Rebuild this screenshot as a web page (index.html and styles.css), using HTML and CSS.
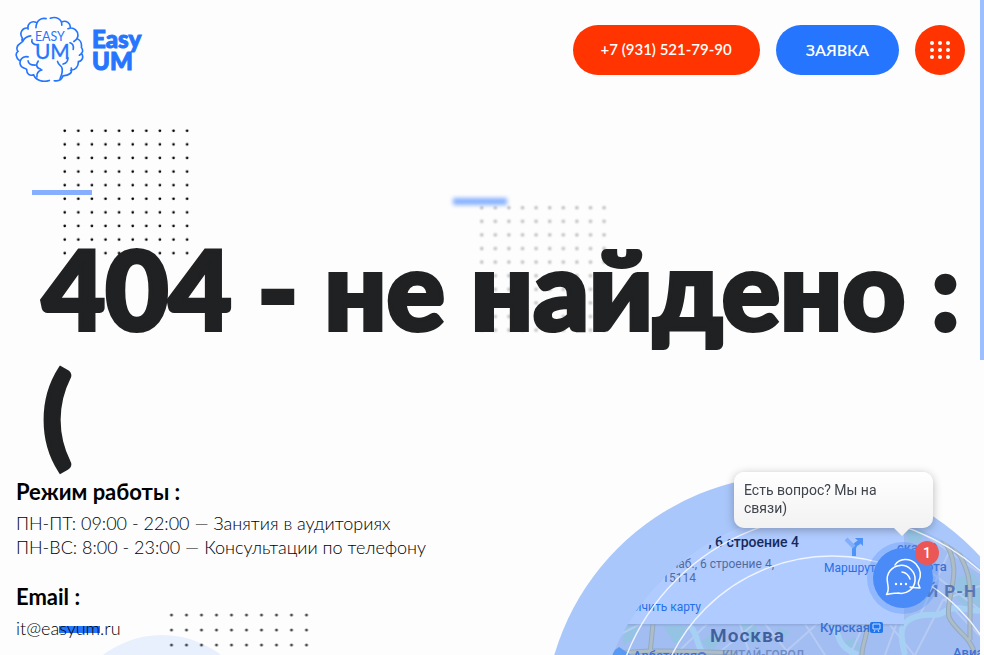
FILE: index.html
```html
<!DOCTYPE html>
<html lang="ru">
<head>
<meta charset="utf-8">
<meta name="viewport" content="width=device-width, initial-scale=1">
<title>404 - не найдено</title>
<link rel="stylesheet" href="styles.css">
</head>
<body>
<header class="header">
  <a class="logo" href="#">
    <svg class="logo-mark" viewBox="13 12 214 204" aria-hidden="true">
      <g class="logo-lines">
        <path d="M108 18C94 15 78 22 77 46M77 29C62 24 50 34 53 50M53 47C36 44 24 62 36 79Q32 84 37 88M61 71C50 72 44 76 39 84C34 96 22 91 19 107Q18 114 22 118C13 124 16 138 26 146M53 135C34 130 26 148 29 158C32 172 46 168 49 174C48 188 58 194 70 190C76 206 98 214 118 207"/>
        <path d="M121 17C139 10 157 20 156 38M156 28C169 22 184 32 182 47M175 49C192 41 210 58 204 76Q202 83 193 88M204 80C217 86 217 98 216 106C224 117 218 125 210 130M216 124C225 136 217 149 207 149C207 164 198 176 183 176M185 169C190 185 177 192 160 193C156 206 146 210 133 208"/>
        <path d="M65 82C62 90 69 98 80 98M181 92C190 95 193 102 191 112M53 147C53 157 63 161 77 160M84 148C76 158 78 170 91 172M95 175C84 178 79 187 80 196M143 149C146 164 157 160 157 171C159 181 156 190 151 201M175 138C175 150 170 155 160 157"/>
      </g>
      <text class="logo-easy" x="74" y="85">EASY</text>
      <text class="logo-um" x="74" y="143">UM</text>
    </svg>
    <span class="logo-name">Easy<br>UM</span>
  </a>
  <nav class="actions">
    <a class="pill pill-red" href="tel:+79315217990">+7 (931) 521-79-90</a>
    <button class="pill pill-blue" type="button">ЗАЯВКА</button>
    <button class="menu" type="button" aria-label="Меню">
      <svg viewBox="0 0 50 50"><g fill="#fff"><circle cx="17" cy="18" r="2"/><circle cx="25" cy="18" r="2"/><circle cx="33" cy="18" r="2"/><circle cx="17" cy="25" r="2"/><circle cx="25" cy="25" r="2"/><circle cx="33" cy="25" r="2"/><circle cx="17" cy="32" r="2"/><circle cx="25" cy="32" r="2"/><circle cx="33" cy="32" r="2"/></g></svg>
    </button>
  </nav>
</header>

<main class="hero">
  <svg class="dots dots-sharp" viewBox="0 0 100 100" aria-hidden="true"><defs><pattern id="dot" width="10" height="10" patternUnits="userSpaceOnUse"><circle cx="2" cy="2" r="1"/></pattern></defs><rect width="100" height="100" fill="url(#dot)"/></svg>
  <span class="bar bar-sharp"></span>
  <svg class="dots dots-soft" viewBox="0 0 100 100" aria-hidden="true"><rect width="100" height="100" fill="url(#dot)"/></svg>
  <span class="bar bar-soft"></span>
  <h1>404 - не найдено : (</h1>
</main>

<footer class="footer">
  <span class="disc"></span>
  <svg class="dots dots-footer" viewBox="0 0 100 30" aria-hidden="true"><rect width="100" height="30" fill="url(#dot)"/></svg>
  <span class="bar bar-footer"></span>
  <svg class="map" viewBox="540 470 440 185" role="img" aria-label="Карта">
    <defs><clipPath id="lens"><circle cx="827" cy="741" r="231"/></clipPath>
    <linearGradient id="fade" x2="0" y2="1"><stop stop-color="#829bc9" stop-opacity=".6"/><stop offset="1" stop-color="#829bc9" stop-opacity="0"/></linearGradient></defs>
    <circle cx="795" cy="726" r="251" fill="#a9c7fb"/>
    <g clip-path="url(#lens)">
      <rect x="540" y="500" width="440" height="155" fill="#a2bdf1"/>
      <g fill="#94c3e3"><path d="M625 626l14-2-4 13-12 8zM664 626l22 0-3 14-9 4zM701 641l15-9 5 8-10 12zM739 624l15 0 8 16-10 3zM777 627l12 5-7 9zM958 577l16-4 6 12v30l-12-6-14-13zM921 589l10 7-5 8-8-6zM905 530l21 1-8 12-9-1zM841 643l15-6 4 14z"/></g>
      <g fill="none" stroke="#b6cbf3" stroke-width="2"><path d="M610 640l30-16M675 655l32-31M716 655l38-31M750 655l-10-31M765 624l25 31M782 655l35-31M805 624l20 31M850 655l14-31M890 625l24 30M905 600l-20 55M915 655l28-55 37-14M945 600l35 36M925 535l55 38M915 560l65 50M950 550l-30 65"/></g>
      <g fill="none" stroke="#a7d0f5" stroke-width="6"><path d="M905 655C899 632 900 622 915 617S936 618 944 612C956 604 963 610 980 611M829 624C844 632 831 644 858 655M690 625C700 639 695 643 704 655"/></g>
      <g fill="none" stroke="#94a9be" stroke-width="5"><path d="M942 538C967 570 944 598 949 617C955 631 971 636 975 655M947 538C977 572 969 590 970 640M653 624L650 654M610 655C650 648 690 652 735 653M868 624C866 640 862 645 862 655"/></g>
      <g fill="none" stroke="#adbdc8" stroke-width="3"><path d="M942 538C967 570 944 598 949 617C955 631 971 636 975 655M947 538C977 572 969 590 970 640M653 624L650 654M610 655C650 648 690 652 735 653M868 624C866 640 862 645 862 655"/></g>
      <path d="M608 655l11-8 12 8z" fill="#579af4"/>
      <rect x="540" y="500" width="364" height="124" fill="#b0cbff"/>
      <rect x="540" y="624" width="364" height="3" fill="url(#fade)"/>
      <text class="place" x="799" y="547" text-anchor="end">, 6 строение 4</text>
      <text class="note" x="774" y="568" text-anchor="end">наб., 6 строение 4,</text>
      <text class="note" x="696" y="582" text-anchor="end">115114</text>
      <text class="link" x="701" y="611" text-anchor="end">личить карту</text>
      <text class="link" x="824" y="572">Маршруты</text>
      <path d="M854 556v-7q0-5 6-7" fill="none" stroke="#4f93f6" stroke-width="4"/><path d="M855 538h8v8z" fill="#4f93f6"/><path d="M846 539l8 8" stroke="#83aef9" stroke-width="4"/>
      <text class="city" x="710" y="642">Москва</text>
      <text class="area" x="722" y="659">КИТАЙ-ГОРОД</text>
      <text class="metro" x="633" y="660">Арбатская</text><circle cx="702" cy="657" r="4" fill="none" stroke="#5279cc" stroke-width="2"/>
      <text class="metro" x="820" y="632">Курская</text>
      <rect x="870" y="622" width="13" height="11" rx="2" fill="#1f75ed"/><path d="M873 624h7v5h-7zM874 632l1-2M879 632l-1-2" fill="none" stroke="#c7dcff"/>
      <text class="metro" x="897" y="552">ская О</text>
      <text class="metro" x="904" y="571">ворота</text>
      <text class="district" x="977" y="597" text-anchor="end">ИЙ Р-Н</text>
      <text class="metro" x="953" y="657">Авиа</text>
    </g>
    <g fill="none" stroke="#eff5ff" stroke-width="1.4"><circle cx="833" cy="737" r="222"/><circle cx="832" cy="735" r="179"/></g>
  </svg>
  <section class="contact">
    <h2>Режим работы :</h2>
    <p>ПН-ПТ: 09:00 - 22:00 — Занятия в аудиториях<br>ПН-ВС: 8:00 - 23:00 — Консультации по телефону</p>
  </section>
  <section class="contact">
    <h2>Email :</h2>
    <p><a href="mailto:it@easyum.ru">it@easyum.ru</a></p>
  </section>
</footer>

<aside class="chat">
  <p class="bubble">Есть вопрос? Мы на связи)</p>
  <button class="chat-button" type="button" aria-label="Открыть чат">
    <svg viewBox="0 0 60 60" fill="none" stroke="#fff" stroke-width="1.5" stroke-linejoin="round" stroke-linecap="round"><path d="M13.500 46.500c3-4 1.500-8 1-12A14 14 0 1 1 25 45c-4 .5-6 0-11.500 1.500Z"/><path d="M22 17C26 10 37 9.500 43 16c6 7 4.500 14 2.500 18-1 2.500 1 4 1.500 6-4-.5-6 0-10-1"/><path d="M29 24q6 1 8 7"/><g fill="#fff" stroke="none"><circle cx="23" cy="36" r="1.200"/><circle cx="28" cy="36" r="1.200"/><circle cx="33" cy="36" r="1.200"/></g></svg>
    <span class="badge">1</span>
  </button>
</aside>
<div class="scroll"></div>
</body>
</html>
```
FILE: styles.css
```css
* { box-sizing: border-box; }

body {
  margin: 0;
  padding-right: 4px;
  height: 100vh;
  overflow: hidden;
  display: flex;
  flex-direction: column;
  background: #fdfdfd;
  color: #000;
  font-family: Lato, "Open Sans", sans-serif;
}

h1, h2, p { margin: 0; }
a { color: inherit; text-decoration: none; }
button { border: 0; padding: 0; font: inherit; cursor: pointer; }

.header {
  display: flex;
  align-items: center;
  justify-content: space-between;
  height: 100px;
  padding: 0 15px;
}
.logo { display: flex; align-items: center; gap: 7px; color: #2575ff; }
.logo-mark { width: 70px; height: 68px; }
.logo-lines { fill: none; stroke: #2575ff; stroke-width: 5; stroke-linecap: round; }
.logo-mark text { fill: #2575ff; font-family: Lato, sans-serif; }
.logo-easy { font-size: 38px; font-weight: 400; }
.logo-um { font-size: 64px; font-weight: 400; stroke: #2575ff; stroke-width: 1px; }
.logo-name { font-size: 24px; line-height: 22px; font-weight: 900; -webkit-text-stroke: 1px #2575ff; }

.actions { display: flex; gap: 16px; }
.pill {
  display: flex;
  align-items: center;
  height: 50px;
  padding: 0 30px 2px;
  border-radius: 25px;
  color: #fff;
  font-size: 16px;
  font-weight: 600;
}
.pill-red, .menu { background: #ff3400; }
.pill-red { padding: 0 28px 2px; font-size: 15px; }
.pill-blue { background: #2575ff; }
.menu { width: 50px; height: 50px; border-radius: 50%; }
.menu svg { display: block; }

.hero { position: relative; padding: 126px 0 6px 42px; }
h1 {
  position: relative;
  color: #202122;
  font-size: 109px;
  line-height: 124px;
  font-weight: 900;
  -webkit-text-stroke: 4px #202122;
}
.dots { position: absolute; }
.dots-sharp { width: 136px; height: 136px; left: 62px; top: 28px; }
.dots-soft { width: 136px; height: 136px; left: 479px; top: 105px; opacity: .45; filter: blur(1px); }
.bar { position: absolute; height: 5px; background: #86b0ff; }
.bar-sharp { width: 60px; left: 32px; top: 90px; }
.bar-soft { width: 54px; height: 7px; left: 453px; top: 98px; filter: blur(2px); }

.footer { position: relative; flex: 1; padding: 0 16px; overflow: hidden; }
.contact { position: relative; margin-bottom: 26px; }
h2 { font-size: 22px; line-height: 24px; font-weight: 700; margin-bottom: 7px; }
.contact p { font-size: 18px; line-height: 24px; font-weight: 300; }
.disc { position: absolute; left: 65px; top: 155px; width: 194px; height: 194px; border-radius: 50%; background: #e8f0fd; }
.dots-footer { width: 151px; height: 45px; left: 168px; top: 132px; opacity: .7; }
.bar-footer { width: 41px; height: 7px; left: 59px; top: 146px; background: #2575ff; }
.map { position: absolute; right: 0; bottom: 0; width: 440px; height: 185px; }
.map text { font-family: Roboto, sans-serif; }
.place { font-size: 14px; font-weight: 500; fill: #152a5c; }
.note { font-size: 12px; fill: #536b9f; }
.link { font-size: 12px; fill: #266fe8; }
.city { font-size: 19px; font-weight: 600; fill: #405f9d; letter-spacing: 1px; }
.area { font-size: 12px; font-weight: 500; fill: #6e8bc4; }
.metro { font-size: 13px; font-weight: 500; fill: #3c70d2; }
.district { font-size: 17px; font-weight: 700; fill: #5877b2; letter-spacing: 1px; }

.chat { position: fixed; right: 51px; bottom: 47px; width: 199px; font-family: Roboto, sans-serif; }
.bubble {
  position: relative;
  padding: 9px 10px 11px;
  border-radius: 10px;
  background: linear-gradient(#fff, #f2f2f2);
  box-shadow: 0 2px 10px rgba(0, 0, 0, .28);
  color: #3f444d;
  font-size: 14px;
  line-height: 18px;
}
.bubble::after {
  content: "";
  position: absolute;
  right: 23px;
  top: 100%;
  border: 8px solid transparent;
  border-top-color: #f2f2f2;
  border-bottom: 0;
}
.chat-button {
  position: relative;
  display: block;
  width: 60px;
  height: 60px;
  margin: 20px 0 0 139px;
  border-radius: 50%;
  background: #4a8bf7;
  box-shadow: 0 0 0 6px rgba(74, 139, 247, .3);
}
.chat-button svg { display: block; }
.badge {
  position: absolute;
  right: -6px;
  top: -7px;
  width: 24px;
  height: 24px;
  border-radius: 50%;
  background: #eb5757;
  color: #fff;
  font-size: 14px;
  line-height: 24px;
  font-weight: 500;
  text-align: center;
}
.scroll { position: fixed; right: 0; top: 0; width: 4px; height: 55vh; background: #9bbfff; }
```
